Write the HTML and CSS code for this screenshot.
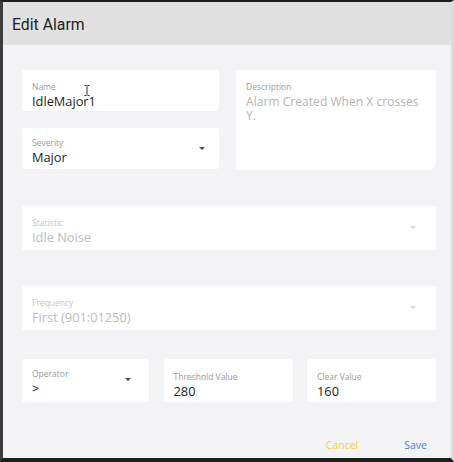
FILE: index.html
```html
<!DOCTYPE html>
<html lang="en">
<head>
<meta charset="utf-8">
<title>Edit Alarm</title>
<link rel="stylesheet" href="styles.css">
</head>
<body>
<div class="dialog">
  <div class="header"><h1 class="title">Edit Alarm</h1></div>
  <div class="content">
    <div class="top-grid">
      <div class="left-col">
        <div class="field">
          <span class="label">Name</span>
          <span class="value">IdleMajor1</span>
          <svg class="cursor" width="6" height="11" viewBox="0 0 6 11"><path d="M0.5 0.5h2M3.5 0.5h2M3 1v9M0.5 10.5h2M3.5 10.5h2" stroke="#333" stroke-width="1" fill="none"/></svg>
        </div>
        <div class="field select">
          <div class="field-text">
            <span class="label">Severity</span>
            <span class="value">Major</span>
          </div>
          <span class="caret"></span>
        </div>
      </div>
      <div class="field desc">
        <span class="label">Description</span>
        <span class="value muted">Alarm Created When X crosses Y.</span>
      </div>
    </div>
    <div class="field select wide disabled">
      <div class="field-text">
        <span class="label">Statistic</span>
        <span class="value">Idle Noise</span>
      </div>
      <span class="caret"></span>
    </div>
    <div class="field select wide disabled">
      <div class="field-text">
        <span class="label">Frequency</span>
        <span class="value">First (901:01250)</span>
      </div>
      <span class="caret"></span>
    </div>
    <div class="triple">
      <div class="field select op">
        <div class="field-text">
          <span class="label">Operator</span>
          <span class="value">&gt;</span>
        </div>
        <span class="caret"></span>
      </div>
      <div class="field small">
        <span class="label">Threshold Value</span>
        <span class="value">280</span>
      </div>
      <div class="field small">
        <span class="label">Clear Value</span>
        <span class="value">160</span>
      </div>
    </div>
    <div class="actions">
      <button class="btn cancel">Cancel</button>
      <button class="btn save">Save</button>
    </div>
  </div>
</div>
</body>
</html>
```
FILE: styles.css
```css
* { box-sizing: border-box; }
html, body { margin: 0; padding: 0; background: #2a2a2a; }
body { font-family: "Open Sans", "Liberation Sans", sans-serif; }

.dialog {
  width: 454px;
  height: 462px;
  border-top: 2px solid #1e1e1e;
  border-left: 3px solid #3c3c3c;
  border-right: 3px solid #dcdcdc;
  border-bottom: 4px solid #1e1e1e;
  background: #f3f3f5;
  display: flex;
  flex-direction: column;
}

.header {
  height: 43px;
  background: #e1e1e1;
  display: flex;
  align-items: center;
  padding-left: 9px;
  flex-shrink: 0;
}
.title {
  margin: 0;
  font-family: Roboto, "Liberation Sans", sans-serif;
  font-weight: 400;
  font-size: 15.8px;
  color: #1f1f1f;
  padding-top: 1px;
}

.content {
  flex: 1;
  padding: 25px 15px 0 19px;
  display: flex;
  flex-direction: column;
}

.top-grid {
  display: grid;
  grid-template-columns: 197px 200px;
  column-gap: 17px;
  margin-bottom: 36px;
}
.left-col {
  display: flex;
  flex-direction: column;
  gap: 17px;
}

.field {
  position: relative;
  background: #fff;
  border-radius: 3px;
  padding: 11px 10px 0 10px;
  height: 41px;
  display: flex;
  flex-direction: column;
}
.field.select {
  flex-direction: row;
  align-items: center;
  padding-top: 0;
}
.field-text {
  flex: 1;
  display: flex;
  flex-direction: column;
  padding-top: 5px;
}
.label {
  font-size: 8.5px;
  line-height: 11px;
  color: #9a9a9a;
  white-space: nowrap;
}
.value {
  font-size: 12.8px;
  line-height: 18px;
  color: #1e1e1e;
  white-space: nowrap;
}
.value.muted {
  color: #b4b4b4;
  white-space: normal;
  font-size: 12px;
  line-height: 14px;
  margin-top: 3px;
  letter-spacing: 0.05px;
}

.desc {
  height: 100px;
  padding-top: 11px;
  padding-right: 8px;
  border-bottom-right-radius: 8px;
}

.caret {
  width: 0;
  height: 0;
  border-left: 3.5px solid transparent;
  border-right: 3.5px solid transparent;
  border-top: 3.5px solid #4a4a4a;
  margin-right: 4px;
  margin-top: -1px;
}

.wide {
  height: 44px;
  margin-bottom: 36px;
}
.wide .field-text { padding-top: 7px; }
.wide .caret { margin-right: 10px; border-top-color: #d6d6d6; }
.disabled .label { color: #c4c4c4; }
.disabled .value { color: #bcbcbc; }

.triple {
  display: grid;
  grid-template-columns: 127px 129px 129px;
  column-gap: 14.5px;
  margin-top: -7px;
}
.triple .field { height: 43px; padding-top: 12px; }
.triple .field.select { padding-top: 0; }
.triple .field-text { padding-top: 4px; }
.op .caret { margin-right: 8px; margin-top: -2px; }

.cursor {
  position: absolute;
  left: 62px;
  top: 15px;
}

.actions {
  display: flex;
  justify-content: flex-end;
  margin-top: 32px;
  padding-right: 9px;
}
.btn {
  background: none;
  border: none;
  font-family: "Open Sans", "Liberation Sans", sans-serif;
  font-size: 10.5px;
  padding: 4px 0;
  cursor: pointer;
}
.cancel { color: #f2d23c; margin-right: 46px; margin-left: 0; }
.save { color: #4f80cf; }
```
